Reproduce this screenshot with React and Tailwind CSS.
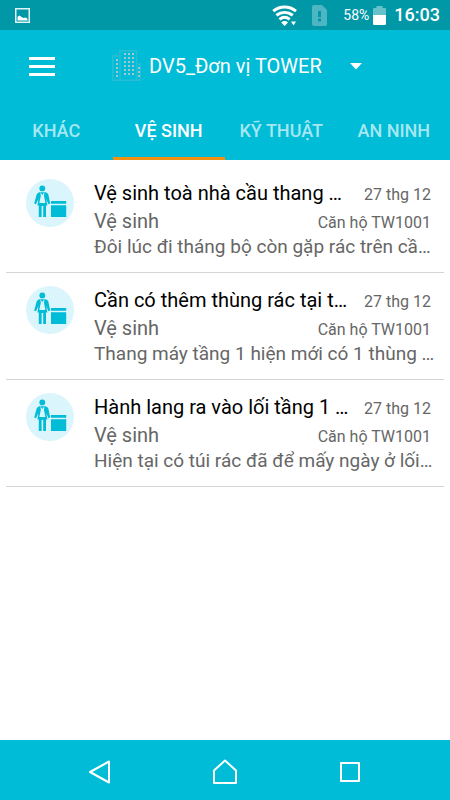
const tabs = ["KHÁC", "VỆ SINH", "KỸ THUẬT", "AN NINH"];

const requests = [
  {
    id: 1,
    title: "Vệ sinh toà nhà cầu thang …",
    category: "Vệ sinh",
    date: "27 thg 12",
    apartment: "Căn hộ TW1001",
    text: "Đôi lúc đi tháng bộ còn gặp rác trên cầ…",
  },
  {
    id: 2,
    title: "Cần có thêm thùng rác tại t…",
    category: "Vệ sinh",
    date: "27 thg 12",
    apartment: "Căn hộ TW1001",
    text: "Thang máy tầng 1 hiện mới có 1 thùng …",
  },
  {
    id: 3,
    title: "Hành lang ra vào lối tầng 1 …",
    category: "Vệ sinh",
    date: "27 thg 12",
    apartment: "Căn hộ TW1001",
    text: "Hiện tại có túi rác đã để mấy ngày ở lối…",
  },
];

const WifiIcon = () => (
  <svg width="26" height="22" viewBox="0 0 26 22" fill="none">
    <g stroke="#fff" strokeWidth="3">
      <path d="M1.2 7.2C8 1.7 17.2 1.7 24 7.2" />
      <path d="M4.4 11.3C9.4 7.4 15.8 7.4 20.8 11.3" />
      <path d="M7.5 15.3C10.6 12.8 14.6 12.8 17.7 15.3" />
    </g>
    <path d="M9.2 18.4C11.2 16.6 14 16.6 16 18.4L12.6 22Z" fill="#fff" />
    <path d="M19 17.6H24L21.5 21.6Z" fill="#fff" />
  </svg>
);

const SimIcon = () => (
  <svg width="15" height="22" viewBox="0 0 15 22">
    <path d="M2 1H10L15 6V20Q15 22 13 22H2Q0 22 0 20V3Q0 1 2 1Z" fill="#4db6c2" />
    <path d="M6 7H9V13H6ZM6 14.5H9V17.5H6Z" fill="#0097a7" />
  </svg>
);

const BatteryIcon = () => (
  <svg width="13" height="19" viewBox="0 0 13 19">
    <path d="M3.5 0H9.5V2H12Q13 2 13 3V9H0V3Q0 2 1 2H3.5Z" fill="#66c1cb" />
    <path d="M0 9H13V18Q13 19 12 19H1Q0 19 0 18Z" fill="#fff" />
  </svg>
);

const BuildingIcon = () => (
  <svg width="30" height="32" viewBox="0 0 30 32" fill="none">
    <g stroke="#28bdd5" strokeWidth="1.5">
      <path d="M9 30V.75H25.5V30" />
      <path d="M9 6H1.75V30.25H29.25V14H25.5" />
    </g>
    <g stroke="#a9c5cc" strokeWidth="2" strokeDasharray="2 2">
      <path d="M14 3V25M18 3V25M22 3V25" />
      <path d="M6 9V27M28 17V27" />
    </g>
  </svg>
);

const CleanerIcon = () => (
  <svg width="48" height="48" viewBox="0 0 48 48" className="shrink-0">
    <circle cx="24" cy="24" r="24" fill="#daf5fb" />
    <g fill="#00bcd7">
      <circle cx="16.3" cy="9.4" r="2.9" />
      <path d="M13 13.2H20L22.2 15L24.2 24.5L22.4 25.3L20.2 20L21.4 26.5H20V38H17.2V27H15.6V38H12.8V26.5H11.4L12.4 20L10 25.3L8.2 24.5L10.8 15Z" />
      <path d="M25 22H40.2V24.8H25ZM25 26.2H40.2V38H25Z" />
    </g>
    <path d="M14.4 13.2L16.3 16L18.4 13.2L18 17L19.4 24H13.3L14.8 17Z" fill="#daf5fb" />
  </svg>
);

const StatusBar = () => (
  <div className="flex h-[30px] items-center justify-between bg-[#0097a7] pr-2.5 pl-[15px]">
    <svg width="15" height="15" viewBox="0 0 15 15">
      <path d="M.75 .75H14.25V14.25H.75Z" fill="none" stroke="#e0f3f5" strokeWidth="1.5" />
      <path d="M2.5 12.5V8.7L4.5 7.5L6.5 9L8.5 10L10.5 9.4L12.5 10.8V12.5Z" fill="#fff" />
    </svg>
    <div className="flex items-center text-white">
      <WifiIcon />
      <span className="ml-3.5">
        <SimIcon />
      </span>
      <span className="ml-4 text-sm">58%</span>
      <span className="ml-1">
        <BatteryIcon />
      </span>
      <span className="ml-2 text-lg leading-none font-medium">16:03</span>
    </div>
  </div>
);

const Header = () => (
  <header className="bg-[#00bcd7]">
    <div className="flex h-[72px] items-center pl-[29px] text-white">
      <button type="button" aria-label="Menu" className="flex w-[26px] flex-col gap-[5px]">
        <span className="h-[3px] bg-white" />
        <span className="h-[3px] bg-white" />
        <span className="h-[3px] bg-white" />
      </button>
      <button type="button" className="ml-14 flex items-center">
        <BuildingIcon />
        <span className="ml-2 text-xl">DV5_Đơn vị TOWER</span>
        <svg width="12" height="7" viewBox="0 0 12 7" className="ml-7">
          <path d="M0 0H12L6 6.5Z" fill="#fff" />
        </svg>
      </button>
    </div>
    <nav className="grid grid-cols-4">
      {tabs.map((tab) => (
        <button
          key={tab}
          type="button"
          className={`h-[58px] border-b-[3px] pt-[3px] text-lg font-medium ${
            tab === "VỆ SINH" ? "border-[#f29111] text-white" : "border-transparent text-[#a6e7f2]"
          }`}
        >
          {tab}
        </button>
      ))}
    </nav>
  </header>
);

const RequestItem = ({ item }) => (
  <li className="flex gap-5 border-b border-[#d4d4d4] py-[13px] pr-[13px] pl-5">
    <CleanerIcon />
    <div className="min-w-0 flex-1 whitespace-nowrap text-[#666]">
      <div className="flex items-baseline justify-between">
        <h2 className="text-xl leading-7 text-black">{item.title}</h2>
        <span className="text-base leading-6">{item.date}</span>
      </div>
      <div className="flex items-baseline justify-between">
        <span className="text-xl leading-7">{item.category}</span>
        <span className="text-base leading-6">{item.apartment}</span>
      </div>
      <p className="text-[19px] leading-6">{item.text}</p>
    </div>
  </li>
);

const BottomBar = () => (
  <nav className="flex h-[60px] items-center justify-around bg-[#00bcd7] px-[37px] pt-1">
    <button type="button" aria-label="Back">
      <svg width="26" height="26" viewBox="0 0 26 26" fill="none" stroke="#fff" strokeWidth="2" strokeLinejoin="round">
        <path d="M22 2.5V23.5L3 13Z" />
      </svg>
    </button>
    <button type="button" aria-label="Home">
      <svg width="26" height="26" viewBox="0 0 26 26" fill="none" stroke="#fff" strokeWidth="2" strokeLinejoin="round">
        <path d="M13 1.5L24 11.5V24H2V11.5Z" />
      </svg>
    </button>
    <button type="button" aria-label="Recent apps">
      <svg width="26" height="26" viewBox="0 0 26 26" fill="none" stroke="#fff" strokeWidth="2" strokeLinejoin="round">
        <path d="M4 4H22V22H4Z" />
      </svg>
    </button>
  </nav>
);

const App = () => {
  return (
    <div className="flex min-h-screen flex-col bg-white font-[Roboto,sans-serif]">
      <StatusBar />
      <Header />
      <main className="flex-1 px-1.5 pt-1.5">
        <ul>
          {requests.map((item) => (
            <RequestItem key={item.id} item={item} />
          ))}
        </ul>
      </main>
      <BottomBar />
    </div>
  );
};

export default App;
